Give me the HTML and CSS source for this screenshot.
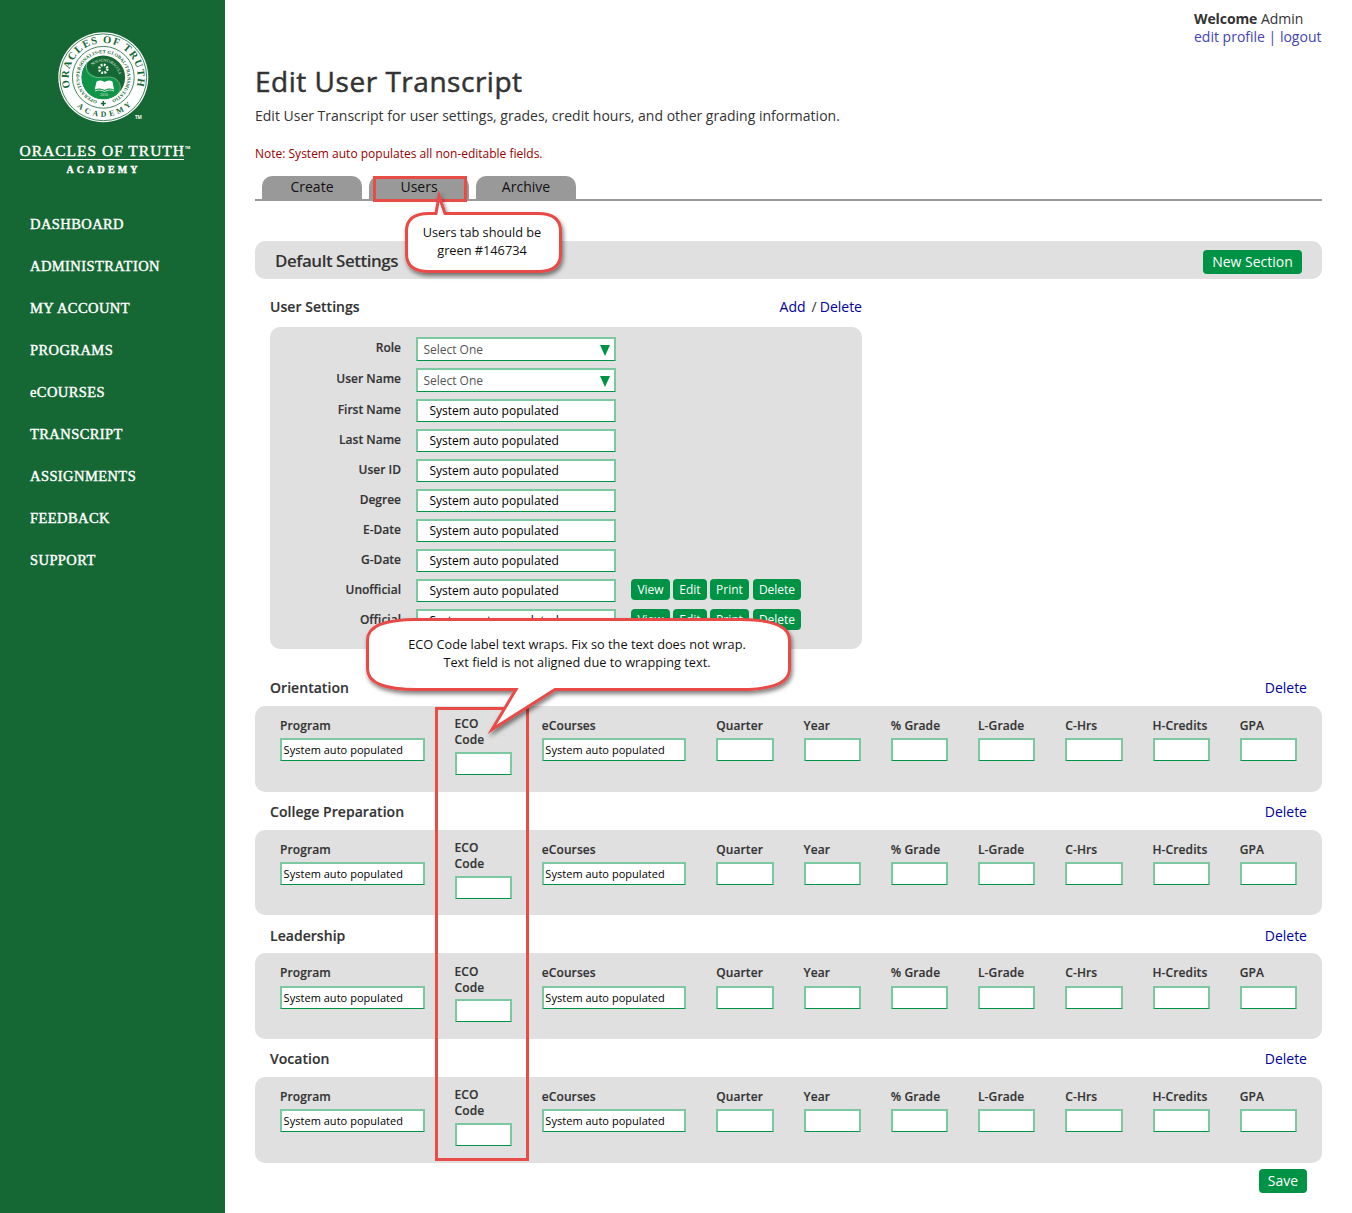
FILE: index.html
```html
<!DOCTYPE html>
<html lang="en">
<head>
<meta charset="utf-8">
<title>Edit User Transcript</title>
<link rel="stylesheet" href="styles.css">
</head>
<body>
<div class="page">
  <aside class="sidebar">
    <svg class="logo" width="225" height="190" viewBox="0 0 225 190">
      <defs>
        <path id="arc-name" d="M70.3 87.5A34.5 34.5 0 1 1 136.3 87.5"/>
        <path id="arc-academy" d="M63.8 77.3A39.5 39.5 0 0 0 142.8 77.3"/>
        <path id="arc-motto" d="M97.2 100.6A24.1 24.1 0 1 1 109.4 100.6"/>
        <path id="arc-inner" d="M92.3 65.6A16.1 16.1 0 0 1 118.4 82.5"/>
      </defs>
      <circle cx="103.3" cy="77.3" r="45" fill="#fff"/>
      <circle cx="103.3" cy="77.3" r="43.4" fill="none" stroke="#156734" stroke-width=".8"/>
      <circle cx="103.3" cy="77.3" r="30.9" fill="none" stroke="#156734" stroke-width=".8"/>
      <circle cx="103.3" cy="77.3" r="21.8" fill="#156734"/>
      <path d="M88 61.5C80 70 79.5 84 88 93.2C97 102 112 101 118.5 92.5C121 88 120 80 113 77.8C106 76 101 79 96 76.5C88 73 85 67 88 61.5Z" fill="#109447"/>
      <path d="M87 62C84 73 91 77 98 77.5C106 77.5 112 75.5 117 80C121 84 121 89 118.5 93" fill="none" stroke="#8fc7a3" stroke-width=".7"/>
      <circle cx="103.3" cy="68.8" r="4" fill="none" stroke="#e4f2e8" stroke-width="2.6" stroke-dasharray="1.9 1.24"/>
      <path d="M96.5 81.8C99 80 102 80.3 104.3 82.1C107 80.3 110 80 112.5 81.8L114 89.5C110 88 107.5 88.2 104.5 90C101 88.2 98 88 94.7 89.5Z" fill="#fff"/>
      <path d="M95 91C98.5 89.5 101 89.8 104.5 91.5C108 89.8 110.5 89.5 114 91" fill="none" stroke="#fff" stroke-width=".8"/>
      <path d="M103.3 101V106M100.8 103.5H105.8" stroke="#156734" stroke-width="1.4"/>
      <g class="seal-text">
        <text font-size="10.5"><textPath href="#arc-name" textLength="127" lengthAdjust="spacing">ORACLES OF TRUTH</textPath></text>
        <text font-size="7.8"><textPath href="#arc-academy" startOffset="33" textLength="60">ACADEMY</textPath></text>
        <text font-size="4.8"><textPath href="#arc-motto" textLength="136">OPERANTES•PERSONALIS•ET GLOBAL•TRANSMUTATIO</textPath></text>
        <text font-size="4" class="seal-light"><textPath href="#arc-inner" textLength="34">NOS SUNT ORACULA</textPath></text>
        <text x="100" y="96.3" font-size="4" class="seal-light">2010</text>
      </g>
      <g class="brand">
        <text x="135" y="119" font-size="4.5" class="tm">TM</text>
        <text x="19.5" y="156" font-size="15.5" textLength="164.5" lengthAdjust="spacing">ORACLES OF TRUTH</text>
        <text x="185" y="149" font-size="3.5" class="tm">TM</text>
        <path d="M20 159.5H184" class="brand-rule"/>
        <text x="66.5" y="172.7" font-size="10" textLength="71" class="brand-sub">ACADEMY</text>
      </g>
    </svg>
    <nav class="menu">
      <a>DASHBOARD</a><a>ADMINISTRATION</a><a>MY ACCOUNT</a><a>PROGRAMS</a><a>eCOURSES</a><a>TRANSCRIPT</a><a>ASSIGNMENTS</a><a>FEEDBACK</a><a>SUPPORT</a>
    </nav>
  </aside>
  <main class="main">
    <div class="topbar"><div class="account"><div><b>Welcome</b> Admin</div><div class="account-links">edit profile | logout</div></div></div>
    <h1>Edit User Transcript</h1>
    <p class="intro">Edit User Transcript for user settings, grades, credit hours, and other grading information.</p>
    <p class="note">Note: System auto populates all non-editable fields.</p>
    <div class="tabs"><a>Create</a><a>Users</a><a>Archive</a></div>
    <div class="bar"><h2>Default Settings</h2><button class="btn large">New Section</button></div>
    <div class="row-head settings-head"><h3>User Settings</h3><div class="links"><a>Add</a><span>/</span><a>Delete</a></div></div>
    <div class="settings" id="settings"></div>
    <div id="sections"></div>
    <div class="actions"><button class="btn large save">Save</button></div>
  </main>

  <svg class="marks" width="1352" height="1213" viewBox="0 0 1352 1213">
    <defs><filter id="shade" x="-10%" y="-20%" width="120%" height="150%"><feDropShadow dx="1.5" dy="3" stdDeviation="2" flood-color="#000" flood-opacity=".5"/></filter></defs>
    <rect x="374.5" y="177.5" width="91" height="23"/>
    <rect x="436.5" y="708.5" width="91" height="451"/>
    <path class="bubble" filter="url(#shade)" d="M436 213.5L439 196L445 213.5H538Q560.5 213.5 560.5 231V254Q560.5 271.5 538 271.5H429Q406.5 271.5 406.5 254V231Q406.5 213.5 429 213.5Z"/>
    <path class="bubble" filter="url(#shade)" d="M417 619.5H740Q789.5 619.5 789.5 640V669Q789.5 689.5 740 689.5H555L492 729.5L516 689.5H417Q367.5 689.5 367.5 669V640Q367.5 619.5 417 619.5Z"/>
  </svg>
  <div class="tip tip-tab">Users tab should be<br>green #146734</div>
  <div class="tip tip-code">ECO Code label text wraps. Fix so the text does not wrap.<br>Text field is not aligned due to wrapping text.</div>
</div>
<script src="app.js"></script>
</body>
</html>
```
FILE: styles.css
```css
* { box-sizing: border-box; }
body { margin: 0; background: #fff; color: #333; font: 14px/18px "Open Sans", sans-serif; }
h1, h2, h3, p { margin: 0; }
.page { position: relative; display: flex; width: 1352px; height: 1213px; overflow: hidden; }
.sidebar { width: 225px; flex: none; background: #156734; }
.logo { display: block; }
.seal-text { font-family: "Liberation Serif", serif; font-weight: bold; fill: #156734; }
.seal-text .seal-light { fill: #d5eadb; font-weight: normal; }
.brand { font-family: "Liberation Serif", serif; fill: #fff; stroke: #fff; stroke-width: .4px; }
.brand .tm { font-family: "Open Sans", sans-serif; font-weight: bold; stroke: none; }
.brand-rule { stroke-width: 1px; }
.brand-sub { font-weight: bold; }
.menu { display: flex; flex-direction: column; padding: 13px 0 0 30px; }
.menu a { height: 42px; line-height: 42px; color: #fff; font-family: "Liberation Serif", serif; font-size: 14.5px; letter-spacing: .42px; -webkit-text-stroke: .4px #fff; }
.main { width: 1127px; padding: 10px 30px 0; }
.topbar { display: flex; justify-content: flex-end; }
.account { width: 128px; white-space: nowrap; }
.account b { letter-spacing: -.1px; }
.account-links { color: #4343b8; }
h1 { margin-top: 15px; font-size: 28px; line-height: 40px; font-weight: 400; letter-spacing: .52px; -webkit-text-stroke: .5px #333; }
.intro { margin-top: 5px; line-height: 20px; }
.note { margin-top: 18px; line-height: 20px; font-size: 12px; color: #900; }
.tabs { display: flex; gap: 7px; margin-top: 12px; padding-left: 7px; border-bottom: 2px solid #999; }
.tabs a { width: 100px; height: 23px; line-height: 22px; text-align: center; background: #999; color: #111; border-radius: 10px 10px 0 0; }
.bar { display: flex; align-items: center; justify-content: space-between; height: 38px; margin-top: 40px; padding: 4px 20px 0; border-radius: 10px; background: #e0e0e0; }
h2 { font-size: 17px; font-weight: 600; letter-spacing: -.48px; line-height: 24px; margin-bottom: 2px; }
.btn { height: 21px; border: 0; border-radius: 4px; padding: 0; background: #009245; color: #fff; font: 12px/21px "Open Sans", sans-serif; }
.btn.large { width: 99px; height: 24px; font-size: 14px; line-height: 24px; }
.btn.save { width: 48px; }
.row-head { display: flex; justify-content: space-between; height: 38px; line-height: 40px; padding: .2px 15px 0; }
h3 { font-size: 14px; font-weight: 600; letter-spacing: .04px; -webkit-text-stroke: .15px #333; }
.links { display: flex; color: #00009c; }
.links a + span { margin: 0 3px 0 6px; color: #333; }
.settings-head { width: 622px; height: 48px; padding-top: 8px; }
.settings { width: 592px; height: 322px; margin-left: 15px; padding-top: 10px; border-radius: 10px; background: #e0e0e0; }
.field { display: flex; height: 30px; }
.field.choice { height: 31px; }
.field label { width: 131px; margin-right: 15px; text-align: right; line-height: 22px; letter-spacing: 0; }
label { font-size: 12px; font-weight: 600; letter-spacing: .1px; -webkit-text-stroke: .15px #333; }
.box { display: block; height: 23px; border: 2px solid #7cc9a1; border-bottom: 1px solid #009245; background: #fff; color: #000; font-size: 11px; line-height: 20px; white-space: nowrap; letter-spacing: .03px; }
.cell .box { padding-left: 1.6px; }
.field .box { width: 200px; padding-left: 11.4px; font-size: 12px; line-height: 20px; letter-spacing: 0; }
.field.choice .box { display: flex; justify-content: space-between; height: 24px; padding: 0 4px 0 5.4px; line-height: 21px; color: #555; }
.caret { display: block; margin-top: 6px; }
.buttons { display: flex; gap: 3px; margin-left: 15px; }
.b-view { width: 39px; }
.b-edit { width: 34px; }
.b-print { width: 39px; }
.b-delete { width: 48px; margin-left: 1px; }
#sections { margin-top: 19px; }
.panel { display: grid; grid-template-columns: repeat(12, 1fr); column-gap: 30px; align-items: start; height: 85.67px; padding: 10px 25px 0; border-radius: 10px; background: #e0e0e0; }
.panel .wide { grid-column: span 2; }
.cell label { display: block; height: 22.2px; line-height: 19px; white-space: nowrap; }
.cell.wrapped label { height: 36px; padding-top: .2px; line-height: 16px; white-space: normal; }
.actions { display: flex; justify-content: flex-end; padding: 6px 15px 0 0; }
.marks { position: absolute; inset: 0; fill: none; stroke: #e84c47; stroke-width: 3; }
.marks .bubble { fill: #fff; stroke-linejoin: miter; stroke-miterlimit: 12; }
.tip { position: absolute; text-align: center; font-size: 12.75px; line-height: 18px; color: #111; white-space: nowrap; }
.tip-tab { left: 407px; top: 223px; width: 150px; }
.tip-code { left: 377px; top: 635px; width: 400px; }
```
FILE: app.js
```js
const auto = 'System auto populated';
const buttons = '<div class="buttons">' + ['View', 'Edit', 'Print', 'Delete']
  .map(n => `<button class="btn b-${n.toLowerCase()}">${n}</button>`).join('') + '</div>';
const caret = '<svg class="caret" width="10" height="12" viewBox="0 0 10 12"><path d="M0 0H10L5 11Z" fill="#009245"/></svg>';
document.getElementById('settings').innerHTML =
  ['Role', 'User Name', 'First Name', 'Last Name', 'User ID', 'Degree', 'E-Date', 'G-Date', 'Unofficial', 'Official']
    .map((name, i) => i < 2
      ? `<div class="field choice"><label>${name}</label><div class="box">Select One${caret}</div></div>`
      : `<div class="field"><label>${name}</label><div class="box">${auto}</div>${i > 7 ? buttons : ''}</div>`).join('');
const columns = ['Program', 'ECO Code', 'eCourses', 'Quarter', 'Year', '% Grade', 'L-Grade', 'C-Hrs', 'H-Credits', 'GPA'];
const cells = columns.map((name, i) => {
  const wide = i === 0 || i === 2;
  return `<div class="cell${wide ? ' wide' : ''}${i === 1 ? ' wrapped' : ''}"><label>${i === 1 ? 'ECO<br>Code' : name}</label><div class="box">${wide ? auto : ''}</div></div>`;
}).join('');
document.getElementById('sections').innerHTML = ['Orientation', 'College Preparation', 'Leadership', 'Vocation']
  .map(name => `<div class="row-head"><h3>${name}</h3><div class="links"><a>Delete</a></div></div><div class="panel">${cells}</div>`).join('');
```
